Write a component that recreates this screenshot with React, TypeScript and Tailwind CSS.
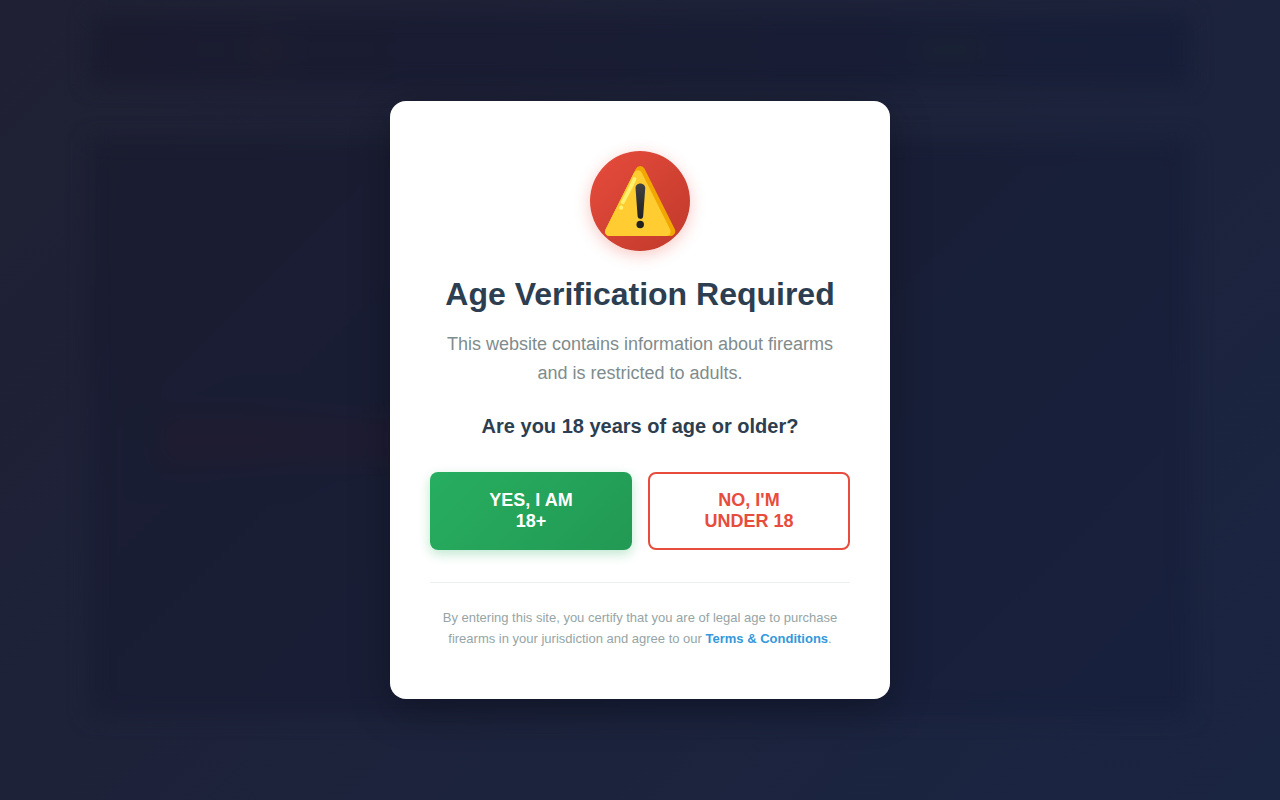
/**
 * Age gate shown over the blurred storefront
 */
import { useState } from 'react';

function WarningIcon() {
    return (
        <svg viewBox="-1 -1 130 130" className="w-19 h-19" aria-hidden="true">
            <defs>
                <linearGradient id="mark" x1="0" y1="0" x2="0" y2="1">
                    <stop offset="0" stopColor="#424242" />
                    <stop offset="1" stopColor="#212121" />
                </linearGradient>
            </defs>
            <path fill="#F2A600" d="M57.16 8.42l-52 104c-1.94 4.02-.26 8.85 3.75 10.79 1.08.52 2.25.8 3.45.81h104c4.46-.04 8.05-3.69 8.01-8.15-.01-1.19-.29-2.37-.81-3.45l-52-104a8.07 8.07 0 0 0-14.4 0z" />
            <path fill="#FFCC32" d="M53.56 15.72l-48.8 97.4c-1.83 3.77-.25 8.31 3.52 10.14.99.48 2.08.74 3.18.76h97.5c4.19-.01 7.58-3.42 7.57-7.61 0-1.13-.26-2.25-.75-3.27l-48.7-97.4a7.47 7.47 0 0 0-9.99-3.5 7.5 7.5 0 0 0-3.53 3.48z" />
            <path fill="url(#mark)" d="M64.36 34.02c5 0 9 3.7 8.6 8l-3.6 48.6c-.38 2.54-2.54 4.3-5.08 3.92a4.65 4.65 0 0 1-4.32-3.92l-3.6-48.6c-.3-4.3 3.4-8 8-8z" />
            <circle cx="64.36" cy="104.2" r="6.4" fill="#212121" />
            <path fill="none" stroke="#FFF170" strokeWidth="6.4" strokeLinecap="round" d="M54.6 26.5c-3.4 8-13 27-20 39.5" />
            <circle cx="31.8" cy="75.4" r="3.6" fill="#FFF170" />
        </svg>
    );
}

function Backdrop() {
    return (
        <div className="fixed inset-0 flex flex-col px-[90px] pt-4 pb-[84px] bg-linear-135 from-[#1f2033] to-[#1a2542]" aria-hidden="true">
            {/* Header bar */}
            <div className="h-17 shrink-0 flex items-center justify-between pl-40 pr-52 bg-linear-to-r from-[#1a1b2f] to-[#171e38] blur-[10px]">
                <div className="w-8 h-8 rounded-full bg-[#1e1e30]" />
                <div className="w-16 h-8 rounded-full bg-[#192135]" />
            </div>
            {/* Main card */}
            <div className="flex-1 mt-14 pt-[276px] px-18 bg-linear-135 from-[#1a1c30] to-[#17203d] blur-[10px]">
                <div className="h-12 w-3/5 bg-linear-to-r from-[#1f1c31] to-[#1c1d33] blur-[6px]" />
            </div>
        </div>
    );
}

export default function App() {
    const [open, setOpen] = useState(true);

    return (
        <div className="min-h-screen font-['Liberation_Sans',Arial,sans-serif]">
            <Backdrop />
            {open && (
                <div className="fixed inset-0 flex items-center justify-center p-5">
                    <div
                        role="dialog"
                        aria-modal="true"
                        aria-labelledby="age-title"
                        className="w-full max-w-[500px] px-10 py-[50px] bg-white rounded-2xl text-center shadow-[0_10px_40px_rgba(0,0,0,0.3)]"
                    >
                        <div className="w-25 h-25 mx-auto mb-6 flex items-center justify-center rounded-full bg-linear-135 from-[#e74c3c] to-[#c0392b] shadow-[0_4px_16px_rgba(231,76,60,0.3)]">
                            <WarningIcon />
                        </div>
                        <h1 id="age-title" className="mb-4 text-[32px] leading-[39px] font-bold text-[#2c3e50]">
                            Age Verification Required
                        </h1>
                        <p className="mb-6 text-lg leading-[29px] text-[#7f8c8d]">
                            This website contains information about firearms and is restricted to adults.
                        </p>
                        <p className="mb-8 text-xl leading-7 font-bold text-[#2c3e50]">
                            Are you 18 years of age or older?
                        </p>

                        {/* Actions */}
                        <div className="grid grid-cols-2 gap-4 mb-8">
                            <button
                                type="button"
                                onClick={() => setOpen(false)}
                                className="px-12 py-[18px] rounded-lg text-lg leading-[21px] font-bold text-white bg-linear-135 from-[#27ae60] to-[#229954] shadow-[0_4px_12px_rgba(39,174,96,0.3)] cursor-pointer"
                            >
                                YES, I AM 18+
                            </button>
                            <button
                                type="button"
                                className="px-10 py-4 rounded-lg border-2 border-[#e74c3c] text-lg leading-[21px] font-bold text-[#e74c3c] bg-white cursor-pointer"
                            >
                                NO, I'M UNDER 18
                            </button>
                        </div>

                        <p className="pt-6 border-t border-[#ecf0f1] text-[13px] leading-[21px] text-[#95a5a6]">
                            By entering this site, you certify that you are of legal age to purchase firearms in your
                            jurisdiction and agree to our{' '}
                            <a href="#terms" className="font-bold text-[#3498db]">Terms &amp; Conditions</a>.
                        </p>
                    </div>
                </div>
            )}
        </div>
    );
}
